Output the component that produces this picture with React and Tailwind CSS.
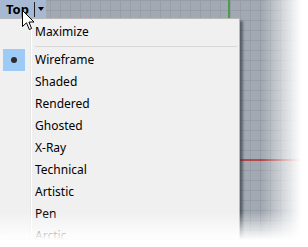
import React from 'react';

const modes = ['Wireframe', 'Shaded', 'Rendered', 'Ghosted', 'X-Ray', 'Technical', 'Artistic', 'Pen', 'Arctic'];

const Cursor = () => (
    <svg width="13" height="21" viewBox="0 0 13 21" className="absolute left-[22px] top-[10px]">
        <path d="M0.5 0.5 L0.5 16.5 L4.5 12.8 L7.3 19.5 L9.6 18.5 L6.9 12 L12 12 Z" fill="#fff" stroke="#000" strokeWidth="1" />
    </svg>
);

// one menu row: gutter cell + label cell
const Row = ({ children, gutter, className = '' }) => (
    <div className={`flex shrink-0 ${className}`}>
        <div className="w-[31px] shrink-0 flex items-center pl-[3px] border-r border-[#e6e6e6]">{gutter}</div>
        <div className="flex-1 flex items-center border-l border-white pl-[3px] pr-[2px]">{children}</div>
    </div>
);

const App = () => {
    return (
        <div className="relative w-[308px] h-[247px] overflow-hidden bg-white font-['Noto_Sans',sans-serif]">
            {/* viewport */}
            <div className="absolute inset-0 bg-[#a2a9b2] bg-[image:linear-gradient(to_right,#969da6_1px,transparent_1px),linear-gradient(to_bottom,#969da6_1px,transparent_1px)] bg-[length:10px_10px]">
                <div className="absolute left-[228px] top-0 w-[2px] h-[20px] bg-[#4c9c4c]" />
                <div className="absolute left-[238px] top-[159px] w-[70px] h-[2px] bg-[#b34848]" />
            </div>

            {/* viewport title */}
            <div className="relative flex items-center h-[18px] w-[46px] bg-[#a7b9d2]">
                <span className="pl-[6px] text-[13px] font-bold leading-none text-black">Top</span>
                <span className="ml-[5px] w-px h-[15px] bg-[#222]" />
                <span className="ml-[3px] w-0 h-0 border-l-[3px] border-r-[3px] border-t-[4px] border-l-transparent border-r-transparent border-t-black" />
            </div>

            {/* display mode menu */}
            <div className="absolute left-0 top-[18px] w-[240px] h-[221px] flex flex-col overflow-hidden bg-[#f0f0f0] border-t border-r border-[#b8b8b8] shadow-[3px_3px_2px_rgba(40,44,50,0.55)] text-[12px] text-black">
                <Row className="h-[2px]" />
                <Row className="h-[22px]">Maximize</Row>
                <Row className="h-[6px]">
                    <div className="w-full h-px bg-[#d7d7d7]" />
                </Row>
                {modes.map((m, i) => (
                    <Row
                        key={m}
                        className="h-[22px]"
                        gutter={i === 0 && (
                            <div className="w-[22px] h-[22px] bg-[#9dcbf6] flex items-center justify-center">
                                <div className="w-[6px] h-[6px] rounded-full bg-[#2c2c2c]" />
                            </div>
                        )}
                    >
                        {m}
                    </Row>
                ))}
            </div>

            <Cursor />

            {/* edge fades */}
            <div className="absolute left-[262px] top-0 w-[46px] h-full bg-[linear-gradient(to_right,rgba(255,255,255,0),#fff_85%)]" />
            <div className="absolute left-0 top-[212px] w-full h-[35px] bg-[linear-gradient(to_bottom,rgba(255,255,255,0),#fff_80%)]" />
        </div>
    );
};

export default App;
